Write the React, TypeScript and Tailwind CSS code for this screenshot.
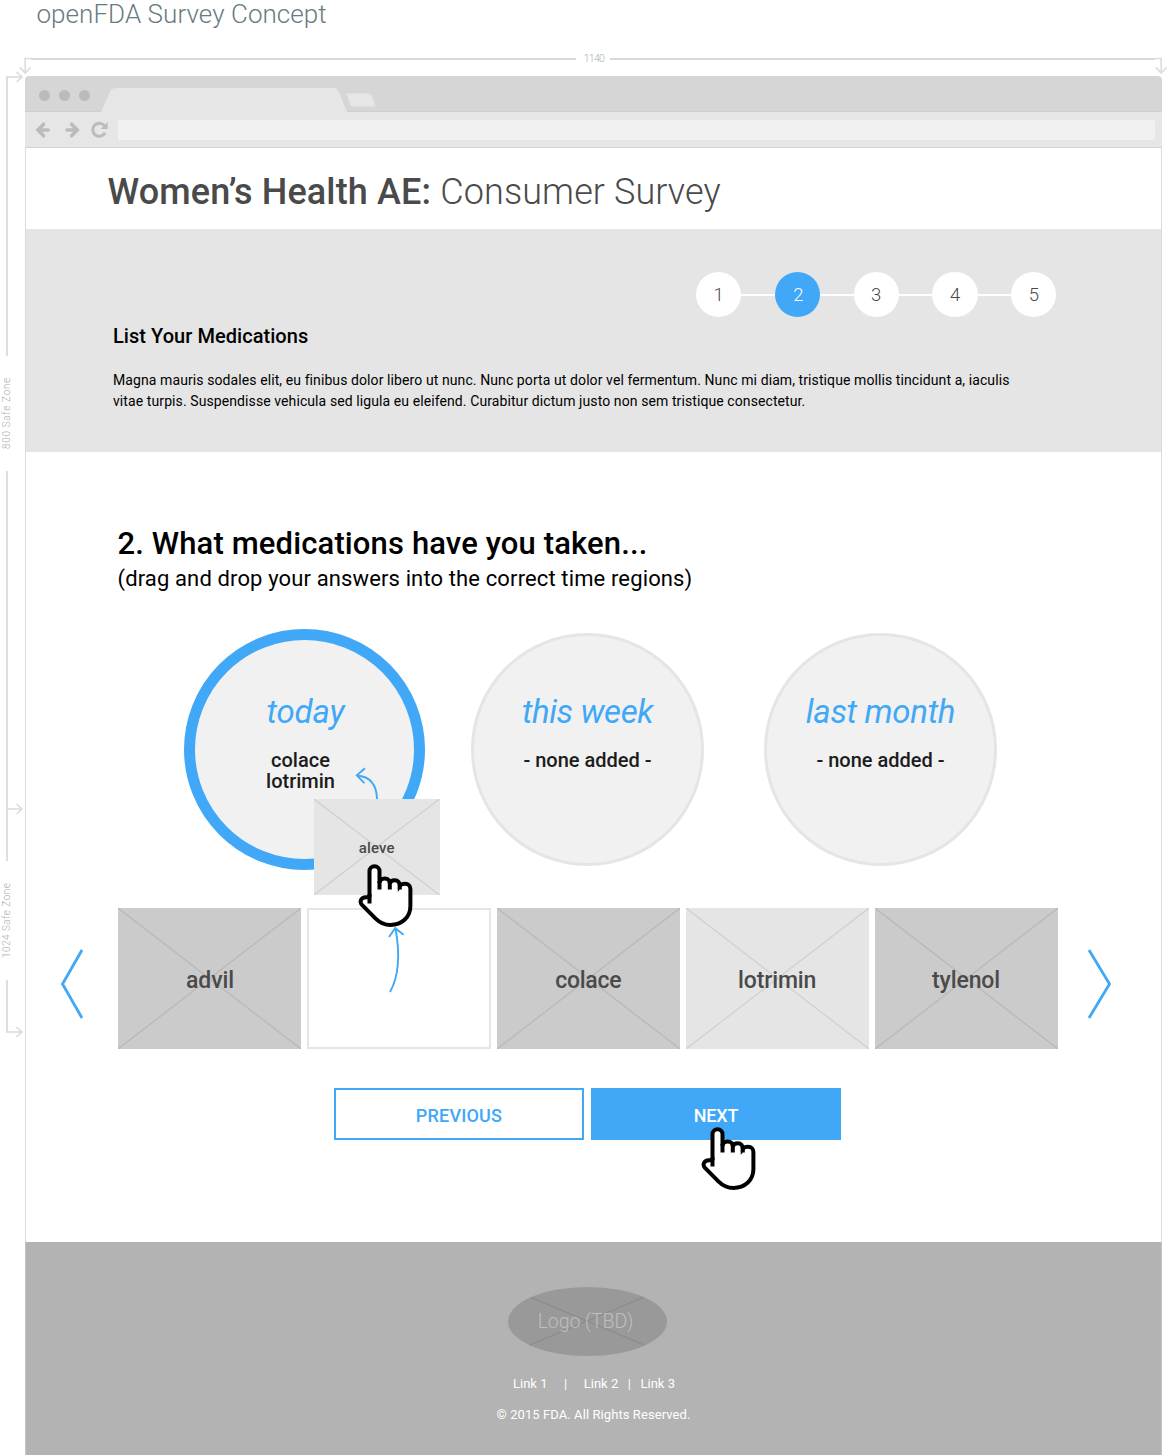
import type { ReactNode } from "react";

function ArrowHead({ className }: { className: string }) {
  return (
    <svg className={className} width="17" height="12" viewBox="0 0 17 12" fill="none" stroke="#d9dddd">
      <path d="M0 6H15.5" strokeWidth="1.6" />
      <path d="M10.5 1L16 6L10.5 11" strokeWidth="1.6" />
    </svg>
  );
}

function TopRuler() {
  return (
    <div className="ml-6 flex h-4 w-[1143px] items-start">
      <svg width="12" height="18" viewBox="0 0 12 18" className="-ml-[5px] shrink-0" fill="none" stroke="#dbdede" strokeWidth="1.7">
        <path d="M12 1.5H6.2V16M0.8 10.3L6.2 16L11.6 10.3" />
      </svg>
      <div className="mt-px h-[1.5px] w-[545px] bg-[#d6d9d9]" />
      <div className="-mt-[4px] w-[34px] pl-0.5 text-center text-[10.5px] leading-3 font-light tracking-[-0.7px] text-[#a9adaf]">1140</div>
      <div className="mt-px h-[1.5px] flex-1 bg-[#d6d9d9]" />
      <svg width="12" height="18" viewBox="0 0 12 18" className="shrink-0" fill="none" stroke="#dbdede" strokeWidth="1.7">
        <path d="M0 1.5H6.2V16M0.8 10.3L6.2 16L11.6 10.3" />
      </svg>
    </div>
  );
}

function RulerText({ children, className }: { children: ReactNode; className: string }) {
  return (
    <div className={"ml-px flex w-3 rotate-180 items-center justify-center text-[10px] leading-3 font-light whitespace-nowrap text-[#aab3b4] [writing-mode:vertical-rl] " + className}>
      {children}
    </div>
  );
}

function SideRuler() {
  return (
    <div className="flex w-[25px] shrink-0 flex-col pt-px">
      <div className="relative ml-1.5 h-[279px] w-0.5 bg-[#dbdfdf]">
        <ArrowHead className="absolute -top-[6px] left-0 max-w-none" />
      </div>
      <RulerText className="h-[115px] tracking-[0.66px]">800 Safe Zone</RulerText>
      <div className="relative ml-1.5 h-[390px] w-0.5 bg-[#dbdfdf]">
        <ArrowHead className="absolute top-[331.5px] left-0 max-w-none" />
      </div>
      <RulerText className="h-[119px] tracking-[0.46px]">1024 Safe Zone</RulerText>
      <div className="relative ml-1.5 h-[52px] w-0.5 bg-[#dbdfdf]">
        <ArrowHead className="absolute top-[45.5px] left-0 max-w-none" />
      </div>
    </div>
  );
}

function BrowserChrome() {
  return (
    <div className="overflow-hidden rounded-t-[4px]">
      <div className="flex h-9 items-end border-b border-[#cfcfcf] bg-[#d6d6d6]">
        <div className="flex gap-[8.6px] self-center pt-[3.5px] pl-[13.5px]">
          {[0, 1, 2].map((i) => (
            <span key={i} className="size-[11.5px] rounded-full bg-[#b9bcbd]" />
          ))}
        </div>
        <svg className="-mb-px ml-[10.5px]" width="277" height="25" viewBox="0 0 277 25" fill="#e6e6e6">
          <path d="M0 25L9.5 4Q11.2 1 15 1H232Q236 1 237.6 4L246 25Z" />
          <path d="M245.5 6.5H268Q270 6.5 270.8 8.3L274.6 19.5H252Q250 19.5 249.2 17.7Z" />
        </svg>
      </div>
      <div className="flex h-9 items-center border-b border-[#d2d2d2] bg-[#e6e6e6]">
        <svg width="92" height="34" viewBox="0 0 92 34" fill="none" stroke="#b9bcbd" className="shrink-0">
          <path d="M18.6 11.2L12.9 17L18.6 22.8M13.4 17H23.2" strokeWidth="3.5" strokeLinecap="round" strokeLinejoin="miter" />
          <path d="M46.6 11.2L52.3 17L46.6 22.8M51.8 17H42" strokeWidth="3.5" strokeLinecap="round" strokeLinejoin="miter" />
          <path d="M79.4 12.8A6.5 6.5 0 1 0 80 19.8" strokeWidth="3" />
          <path d="M82.6 9V16H75.6Z" fill="#b9bcbd" stroke="none" />
        </svg>
        <div className="mr-[7px] ml-px h-5 flex-1 rounded-[2px] bg-[#f1f1f1]" />
      </div>
    </div>
  );
}

function Steps() {
  return (
    <div className="flex items-center pl-[670px]">
      {[1, 2, 3, 4, 5].map((n) => (
        <div key={n} className="flex items-center">
          {n > 1 && <div className="h-0.5 w-[33.5px] bg-white" />}
          <div
            className={
              "flex size-[45.3px] items-center justify-center rounded-full pt-0.5 text-[18.5px] font-light " +
              (n === 2 ? "bg-[#40a8f6] pl-0.5 text-white" : "bg-white text-[#4a4a4a]")
            }
          >
            {n}
          </div>
        </div>
      ))}
    </div>
  );
}

function Hand({ className }: { className: string }) {
  return (
    <svg
      className={"absolute z-20 " + className}
      width="56"
      height="64"
      viewBox="0 0 56 64"
      fill="#fff"
      stroke="#000"
      strokeWidth="4"
    >
      <path d="M11.5 33.2V7.2A5 5 0 0 1 21.5 7.2V19C21.5 16 24 14.5 26.8 14.5C30 14.5 31.8 16.8 31.8 19.5C32.2 17.5 34.2 16.2 36.8 16.2C40 16.2 41.8 18.6 41.8 21.8C42.8 20.4 44.8 19.8 47 19.8C50.6 19.8 52.4 22 52.4 25V42C52.4 53.5 43.5 61 32.5 61C26.5 61 21.4 58.4 17.4 54.4L3.8 40.6C1.8 38.4 2 33.4 8 33.2H11.5" />
      <path d="M11.5 39.4V30M21.5 25.4V17M31.8 25.4V18M41.8 25.4V20" />
    </svg>
  );
}

function TimeZone({ title, items, className, titleClass }: { title: string; items: string[]; className: string; titleClass: string }) {
  return (
    <div className={"shrink-0 rounded-full bg-[#f1f1f1] text-center " + className}>
      <div className={"text-[33px] leading-10 text-[#40a8f6] italic " + titleClass}>{title}</div>
      <div className="mt-[18.5px] text-xl leading-[21px] font-medium text-[#1c1c1c]">
        {items.map((item) => (
          <div key={item}>{item}</div>
        ))}
      </div>
    </div>
  );
}

function Tile({ label, className, line, textClass }: { label: string; className: string; line: string; textClass: string }) {
  return (
    <div className={"relative flex items-center justify-center font-medium text-[#4a4a4a] " + className}>
      <svg className="absolute inset-0 size-full" viewBox="0 0 100 100" preserveAspectRatio="none" stroke={line} strokeWidth="1.4">
        <path d="M0 0L100 100M100 0L0 100" vectorEffect="non-scaling-stroke" />
      </svg>
      <span className={"relative " + textClass}>{label}</span>
    </div>
  );
}

function Chevron({ d, className }: { d: string; className: string }) {
  return (
    <svg width="26" height="74" viewBox="0 0 26 74" fill="none" stroke="#40a8f6" strokeWidth="2.8" className={"mt-[11px] shrink-0 " + className}>
      <path d={d} />
    </svg>
  );
}

export default function App() {
  return (
    <div className="h-[1456px] w-[1167px] overflow-hidden bg-white font-['Roboto',sans-serif] text-black">
      <h1 className="h-[57px] pl-[36.5px] text-[26px] leading-[28px] font-light tracking-[0.05px] text-[#687b80]">openFDA Survey Concept</h1>
      <TopRuler />
      <div className="mt-[3px] flex h-[1379px]">
        <SideRuler />
        <div className="flex w-[1137px] shrink-0 flex-col">
          <BrowserChrome />
          <main className="relative h-[1094px] border-x border-[#d9dbdb]">
            <h2 className="h-[81px] pt-[23px] pl-[81.5px] text-4xl leading-[42px] font-medium tracking-[0.14px] text-[#4a4a4a]">
              Women’s Health AE: <span className="font-light tracking-[0.1px]">Consumer Survey</span>
            </h2>

            <section className="h-[223px] bg-[#e5e5e5] pt-[43px]">
              <Steps />
              <h3 className="mt-[7px] pl-[87px] text-xl leading-6 font-medium tracking-[0.05px]">List Your Medications</h3>
              <p className="mt-[22px] pl-[87px] text-sm leading-[21px] tracking-[0.092px]">
                Magna mauris sodales elit, eu finibus dolor libero ut nunc. Nunc porta ut dolor vel fermentum. Nunc mi diam, tristique mollis tincidunt a, iaculis
                <br />
                vitae turpis. Suspendisse vehicula sed ligula eu eleifend. Curabitur dictum justo non sem tristique consectetur.
              </p>
            </section>

            <section className="pt-[74px]">
              <h3 className="pl-[91.5px] text-[31px] leading-9 font-medium tracking-[0.13px]">2. What medications have you taken...</h3>
              <p className="mt-[3px] pl-[91.5px] text-[22px] leading-7 tracking-[0.13px]">(drag and drop your answers into the correct time regions)</p>
            </section>

            <div className="mt-[35.5px] flex items-center pl-[158px]">
              <TimeZone title="today" items={["colace", "lotrimin"]} className="size-[241px] border-[11px] border-[#40a8f6] pt-[52px] pr-2" titleClass="pl-2.5 tracking-[-0.15px]" />
              <TimeZone title="this week" items={["- none added -"]} className="ml-[46px] size-[233px] border-[3px] border-[#e5e5e5] pt-[56px]" titleClass="tracking-[-0.4px]" />
              <TimeZone title="last month" items={["- none added -"]} className="ml-[60px] size-[233px] border-[3px] border-[#e5e5e5] pt-[56px]" titleClass="tracking-[-0.3px]" />
            </div>

            <div className="mt-[38.5px] flex items-center pl-[34px]">
              <Chevron d="M22 3L2.5 37L22 71" className="" />
              <div className="ml-8 flex w-[939.5px] shrink-0 justify-between">
                <Tile label="advil" className="h-[141px] w-[183px] bg-[#cbcbcb]" line="#bababa" textClass="pt-1 pl-px text-[23px] leading-7 tracking-[-0.1px]" />
                <div className="h-[141px] w-[184px] border-2 border-[#e5e5e5]" />
                <Tile label="colace" className="h-[141px] w-[183px] bg-[#cbcbcb]" line="#bababa" textClass="pt-1 text-[23px] leading-7 tracking-[-0.25px]" />
                <Tile label="lotrimin" className="h-[141px] w-[183px] bg-[#e5e5e5]" line="#d2d2d2" textClass="pt-1 text-[23px] leading-7 tracking-[-0.15px]" />
                <Tile label="tylenol" className="h-[141px] w-[183px] bg-[#cbcbcb]" line="#bababa" textClass="pt-1 text-[23px] leading-7 tracking-[-0.1px]" />
              </div>
              <Chevron d="M3 3L23.5 37L3 71" className="ml-7" />
            </div>

            <div className="mt-[39px] flex gap-[7px] pl-[308px]">
              <button className="h-[52px] w-[250px] border-2 border-[#40a8f6] pt-[3px] text-lg font-medium tracking-[0.2px] text-[#40a8f6]">PREVIOUS</button>
              <button className="h-[52px] w-[250px] bg-[#40a8f6] pt-[3px] text-lg font-medium tracking-[-0.2px] text-white">NEXT</button>
            </div>

            {/* Card being dragged, its motion arrows and the pointers */}
            <Tile label="aleve" className="!absolute top-[651px] left-[288px] z-10 h-[96px] w-[125.5px] bg-[#e5e5e5]" line="#d2d2d2" textClass="pt-0.5 text-[15px] leading-5 tracking-[0.2px]" />
            <svg className="absolute top-[612px] left-[324px]" width="60" height="240" viewBox="350 760 60 240" fill="none" stroke="#40a8f6" strokeWidth="1.9">
              <path d="M377 799C376.6 785 370 776.5 357 775.5M365 768.2L356.8 775.3L364.4 783.2" />
              <path d="M390 992C399.5 975 399.5 950 395.4 928M389 937L395.2 928.2L403.6 934.8" />
            </svg>
            <Hand className="top-[715.5px] left-[332px]" />
            <Hand className="top-[978.5px] left-[675px]" />
          </main>

          <footer className="flex h-[213px] flex-col items-center border-x border-[#c4c4c4] bg-[#b3b3b3] pt-[45px] text-[13px] text-white">
            <div className="relative mr-[12px] flex h-[68.5px] w-[159px] items-center justify-center overflow-hidden rounded-[50%] bg-[#999999]">
              <svg className="absolute inset-0" width="159" height="68" viewBox="0 0 159 68" stroke="#8b8b8b" strokeWidth="1.3">
                <path d="M22 10L136 58M136 10L22 58" />
              </svg>
              <span className="relative pr-1 text-[19.5px] font-light tracking-[-0.1px] text-[#bebebe]">Logo (TBD)</span>
            </div>
            <div className="mt-[20.5px] flex w-[163px] justify-between pl-px leading-4">
              <span>Link 1</span>
              <span className="pl-[7px]">|</span>
              <span className="pl-[7px]">Link 2</span>
              <span>|</span>
              <span>Link 3</span>
            </div>
            <div className="mt-[15px] leading-4 tracking-[0.08px]">© 2015 FDA. All Rights Reserved.</div>
          </footer>
        </div>
      </div>
    </div>
  );
}
